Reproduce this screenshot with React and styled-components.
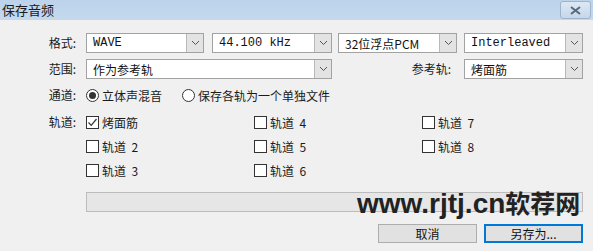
import React from 'react';
import styled, { createGlobalStyle } from 'styled-components';

const Global = createGlobalStyle`
  html, body { margin: 0; padding: 0; background: #f0f0f0; }
  body { font-family: "Noto Sans CJK SC", "Noto Sans", sans-serif; font-size: 12px; color: #000; }
`;

const Window = styled.div`
  position: relative;
  width: 593px;
  height: 251px;
  background: #f0f0f0;
  overflow: hidden;
`;

const TitleBar = styled.div`
  height: 20px;
  display: flex;
  align-items: center;
  justify-content: space-between;
  background: linear-gradient(to bottom, #bcd3eb, #c4d9ee);
  padding-left: 2px;
`;

const Title = styled.span`
  font-size: 13px;
  color: #1b1b1b;
  line-height: 20px;
`;

const CloseBtn = styled.div`
  width: 29px;
  height: 16px;
  margin: 1px 2px 2px 0;
  align-self: flex-start;
  border: 1px solid #9fb4cc;
  border-radius: 3px;
  background: linear-gradient(to bottom, #dde8f4, #c6d7ea);
  display: flex;
  align-items: center;
  justify-content: center;
`;

const Body = styled.div`
  padding: 13px 10px 0 0;
  display: flex;
  flex-direction: column;
`;

const Row = styled.div`
  display: flex;
  align-items: ${(p) => (p.top ? 'flex-start' : 'center')};
  height: ${(p) => p.h || 20}px;
  margin-top: ${(p) => p.mt || 0}px;
`;

const Label = styled.span`
  flex-shrink: 0;
  width: ${(p) => p.w || 76}px;
  margin-right: ${(p) => p.gap || 10}px;
  line-height: ${(p) => p.lh || 20}px;
  text-align: right;
  white-space: nowrap;
  color: #1a1a1a;
`;

const SelectBox = styled.div`
  flex-shrink: 0;
  width: ${(p) => p.w}px;
  height: 20px;
  margin-right: ${(p) => p.mr || 0}px;
  box-sizing: border-box;
  border: 1px solid #a2a2a2;
  background: #fff;
  display: flex;
  align-items: stretch;
`;

const SelectText = styled.span`
  flex: 1;
  padding-left: 6px;
  display: flex;
  align-items: center;
  font-family: ${(p) => (p.mono ? '"Liberation Mono", "Noto Sans CJK SC", monospace' : '"Noto Sans CJK SC", "Noto Sans", sans-serif')};
  font-size: 12px;
  color: #111;
  white-space: nowrap;
`;

const Arrow = styled.span`
  width: 16px;
  border-left: 1px solid #b9b9b9;
  background: #e3e3e3;
  display: flex;
  align-items: center;
  justify-content: center;
`;

const Choice = styled.label`
  display: flex;
  align-items: center;
  width: ${(p) => (p.w ? `${p.w}px` : 'auto')};
  white-space: pre;
  color: #1a1a1a;
`;

const RadioDot = styled.span`
  width: 11px;
  height: 11px;
  border: 1px solid #333;
  border-radius: 50%;
  background: #fff;
  margin-right: 3px;
  display: flex;
  align-items: center;
  justify-content: center;
  &::after {
    content: '';
    width: 7px;
    height: 7px;
    border-radius: 50%;
    background: ${(p) => (p.on ? '#333' : 'transparent')};
  }
`;

const Box = styled.span`
  width: 11px;
  height: 11px;
  border: 1px solid #333;
  background: #fff;
  margin-right: 3px;
  display: flex;
  align-items: center;
  justify-content: center;
`;

const TrackGrid = styled.div`
  display: grid;
  grid-template-columns: 168px 168px 1fr;
  grid-auto-rows: 24px;
  align-items: center;
  flex: 1;
`;

const Progress = styled.div`
  margin-left: 86px;
  width: 497px;
  height: 20px;
  box-sizing: border-box;
  border: 1px solid #bcbcbc;
  background: #e6e6e6;
`;

const Buttons = styled.div`
  display: flex;
  justify-content: flex-end;
  gap: 7px;
  margin-top: 12px;
`;

const Button = styled.div`
  width: 99px;
  height: 19px;
  box-sizing: border-box;
  border: ${(p) => (p.primary ? '2px solid #0078d7' : '1px solid #adadad')};
  background: #e1e1e1;
  display: flex;
  align-items: center;
  justify-content: center;
  color: #111;
  font-size: 12px;
`;

const Watermark = styled.div`
  position: absolute;
  left: 357px;
  top: 188px;
  font-family: "Liberation Sans", "Noto Sans CJK SC", sans-serif;
  font-weight: 700;
  font-size: 28px;
  color: #222;
  line-height: 28px;
  white-space: nowrap;
  span {
    font-family: "Noto Sans CJK SC", sans-serif;
    font-weight: 700;
    font-size: 25px;
  }
`;

const Chevron = () => (
  <svg width="9" height="6" viewBox="0 0 9 6">
    <path d="M1 1 L4.5 4.5 L8 1" fill="none" stroke="#555" strokeWidth="1" />
  </svg>
);

const Select = ({ w, mr, mono, children }) => (
  <SelectBox w={w} mr={mr}>
    <SelectText mono={mono}>{children}</SelectText>
    <Arrow><Chevron /></Arrow>
  </SelectBox>
);

const Check = ({ on }) => (
  <Box>
    {on && (
      <svg width="11" height="11" viewBox="0 0 11 11">
        <path d="M1.5 5.5 L4.2 8.3 L9.5 2" fill="none" stroke="#333" strokeWidth="1.2" />
      </svg>
    )}
  </Box>
);

const tracks = ['烤面筋', '轨道  4', '轨道  7', '轨道  2', '轨道  5', '轨道  8', '轨道  3', '轨道  6'];

export default function App() {
  return (
    <Window>
      <Global />
      <TitleBar>
        <Title>保存音频</Title>
        <CloseBtn>
          <svg width="11" height="9" viewBox="0 0 11 9">
            <path d="M1 1 L10 8 M10 1 L1 8" stroke="#5a6a7c" strokeWidth="2" />
          </svg>
        </CloseBtn>
      </TitleBar>
      <Body>
        <Row>
          <Label>格式:</Label>
          <Select w={118} mr={8} mono>WAVE</Select>
          <Select w={120} mr={6} mono>44.100 kHz</Select>
          <Select w={119} mr={7}>32位浮点PCM</Select>
          <Select w={119} mono>Interleaved</Select>
        </Row>
        <Row mt={6}>
          <Label>范围:</Label>
          <Select w={246}>作为参考轨</Select>
          <Label w={119} gap={13}>参考轨:</Label>
          <Select w={119}>烤面筋</Select>
        </Row>
        <Row mt={6}>
          <Label>通道:</Label>
          <Choice w={96}><RadioDot on />立体声混音</Choice>
          <Choice><RadioDot />保存各轨为一个单独文件</Choice>
        </Row>
        <Row h={72} mt={5} top>
          <Label lh={24}>轨道:</Label>
          <TrackGrid>
            {tracks.map((t, i) => (
              <Choice key={i}><Check on={i === 0} />{t}</Choice>
            ))}
          </TrackGrid>
        </Row>
        <Row mt={10}>
          <Progress />
        </Row>
        <Buttons>
          <Button>取消</Button>
          <Button primary>另存为...</Button>
        </Buttons>
      </Body>
      <Watermark>www.rjtj.cn<span>软荐网</span></Watermark>
    </Window>
  );
}
